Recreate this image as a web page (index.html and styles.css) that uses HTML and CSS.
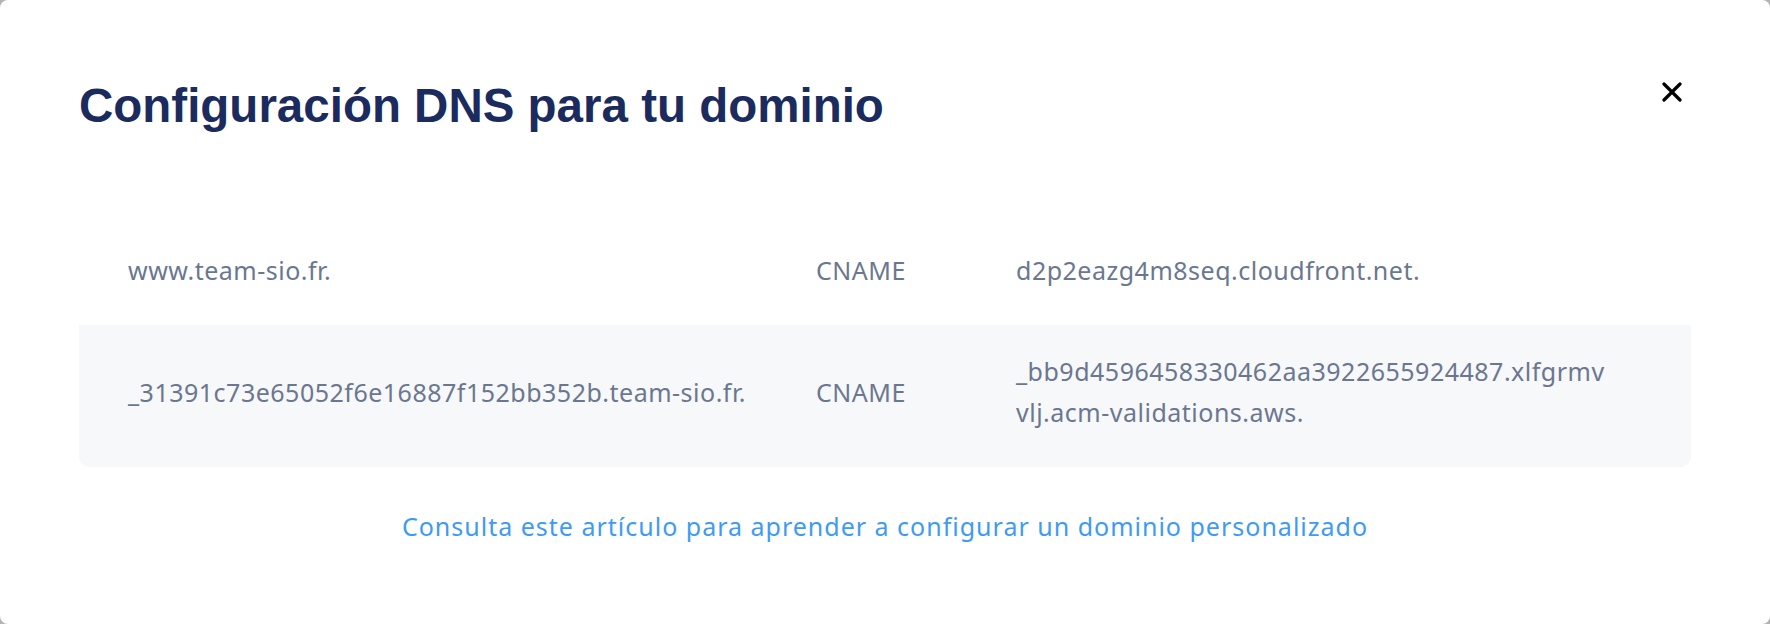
FILE: index.html
```html
<!DOCTYPE html>
<html lang="es">
<head>
    <meta charset="UTF-8">
    <meta name="viewport" content="width=device-width, initial-scale=1.0">
    <title>Configuración DNS</title>
    <link rel="stylesheet" href="styles.css">
</head>
<body>
    <div class="modal">
        <div class="modal-header">
            <h1>Configuración DNS para tu dominio</h1>
            <button class="close" aria-label="Cerrar">
                <svg width="20" height="20" viewBox="0 0 20 20">
                    <path d="M2 2 L18 18 M18 2 L2 18" stroke="#000" stroke-width="3.2" stroke-linecap="round" fill="none"/>
                </svg>
            </button>
        </div>

        <div class="records">
            <div class="record">
                <div class="name">www.team-sio.fr.</div>
                <div class="type">CNAME</div>
                <div class="value">d2p2eazg4m8seq.cloudfront.net.</div>
            </div>
            <div class="record">
                <div class="name">_31391c73e65052f6e16887f152bb352b.team-sio.fr.</div>
                <div class="type">CNAME</div>
                <div class="value">_bb9d4596458330462aa3922655924487.xlfgrmvvlj.acm-validations.aws.</div>
            </div>
        </div>

        <a class="help" href="#">Consulta este artículo para aprender a configurar un dominio personalizado</a>
    </div>
</body>
</html>
```

FILE: styles.css
```css
body {
    margin: 0;
    background-color: #b3b3b3;
    font-family: "Noto Sans", Arial, sans-serif;
}
.modal {
    height: 624px;
    box-sizing: border-box;
    background-color: #fff;
    border-radius: 8px;
    padding: 78px 79px 0 79px;
    display: flex;
    flex-direction: column;
}
.modal-header {
    display: flex;
    justify-content: space-between;
    align-items: flex-start;
}
h1 {
    margin: 0;
    font-family: "Liberation Sans", Arial, sans-serif;
    font-weight: bold;
    font-size: 47.5px;
    line-height: 56px;
    color: #1b2b5e;
}
.close {
    width: 40px;
    height: 40px;
    margin-top: -6px;
    margin-right: -1px;
    padding: 0;
    border: none;
    background: none;
    display: flex;
    align-items: center;
    justify-content: center;
    cursor: pointer;
}
.records {
    margin-top: 90px;
    border-radius: 10px;
    overflow: hidden;
}
.record {
    display: grid;
    grid-template-columns: 688px 200px 598px;
    align-items: center;
    padding: 26px 0 34px 49px;
    font-size: 25px;
    line-height: 41px;
    letter-spacing: 0.5px;
    color: #6b7790;
}
.record:nth-child(even) {
    background-color: #f7f8fa;
}
.value {
    word-break: break-all;
}
.help {
    margin-top: 39px;
    align-self: center;
    font-size: 25px;
    line-height: 41px;
    letter-spacing: 1px;
    color: #3d9bf6;
    text-decoration: none;
}
```
